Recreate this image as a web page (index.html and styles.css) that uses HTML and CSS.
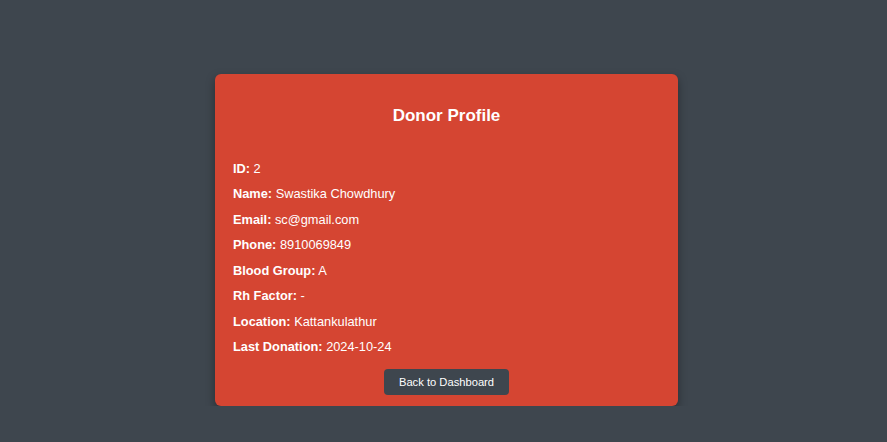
FILE: index.html
```html
<!DOCTYPE html>
<html lang="en">
<head>
<meta charset="utf-8">
<title>Donor Profile</title>
<link rel="stylesheet" href="styles.css">
</head>
<body>
<main class="page">
  <section class="card">
    <h2 class="title">Donor Profile</h2>
    <div class="details">
      <p class="row"><strong>ID:</strong> 2</p>
      <p class="row"><strong>Name:</strong> Swastika Chowdhury</p>
      <p class="row"><strong>Email:</strong> sc@gmail.com</p>
      <p class="row"><strong>Phone:</strong> 8910069849</p>
      <p class="row"><strong>Blood Group:</strong> A</p>
      <p class="row"><strong>Rh Factor:</strong> -</p>
      <p class="row"><strong>Location:</strong> Kattankulathur</p>
      <p class="row"><strong>Last Donation:</strong> 2024-10-24</p>
    </div>
    <div class="actions">
      <a class="btn" href="#">Back to Dashboard</a>
    </div>
  </section>
</main>
</body>
</html>
```
FILE: styles.css
```css
html, body {
  margin: 0;
  padding: 0;
  background: #3e464e;
  font-family: "Liberation Sans", Arial, sans-serif;
  color: #ffffff;
}
.page {
  padding: 74px 0 0 6px;
  display: flex;
  justify-content: center;
}
.card {
  width: 463px;
  box-sizing: border-box;
  background: #d54532;
  border-radius: 6px;
  padding: 31px 18px 11px;
  box-shadow: 0 4px 10px rgba(0, 0, 0, 0.35);
}
.title {
  margin: 0;
  text-align: center;
  font-size: 17px;
  line-height: 22px;
  font-weight: bold;
}
.details {
  margin-top: 34px;
  display: flex;
  flex-direction: column;
  gap: 9.43px;
}
.row {
  margin: 0;
  font-size: 12.8px;
  line-height: 16px;
}
.actions {
  margin-top: 14px;
  display: flex;
  justify-content: center;
}
.btn {
  display: inline-block;
  width: 125px;
  height: 26px;
  line-height: 26px;
  text-align: center;
  background: #3e464e;
  color: #ffffff;
  font-size: 11.2px;
  text-decoration: none;
  border-radius: 4px;
}
```
